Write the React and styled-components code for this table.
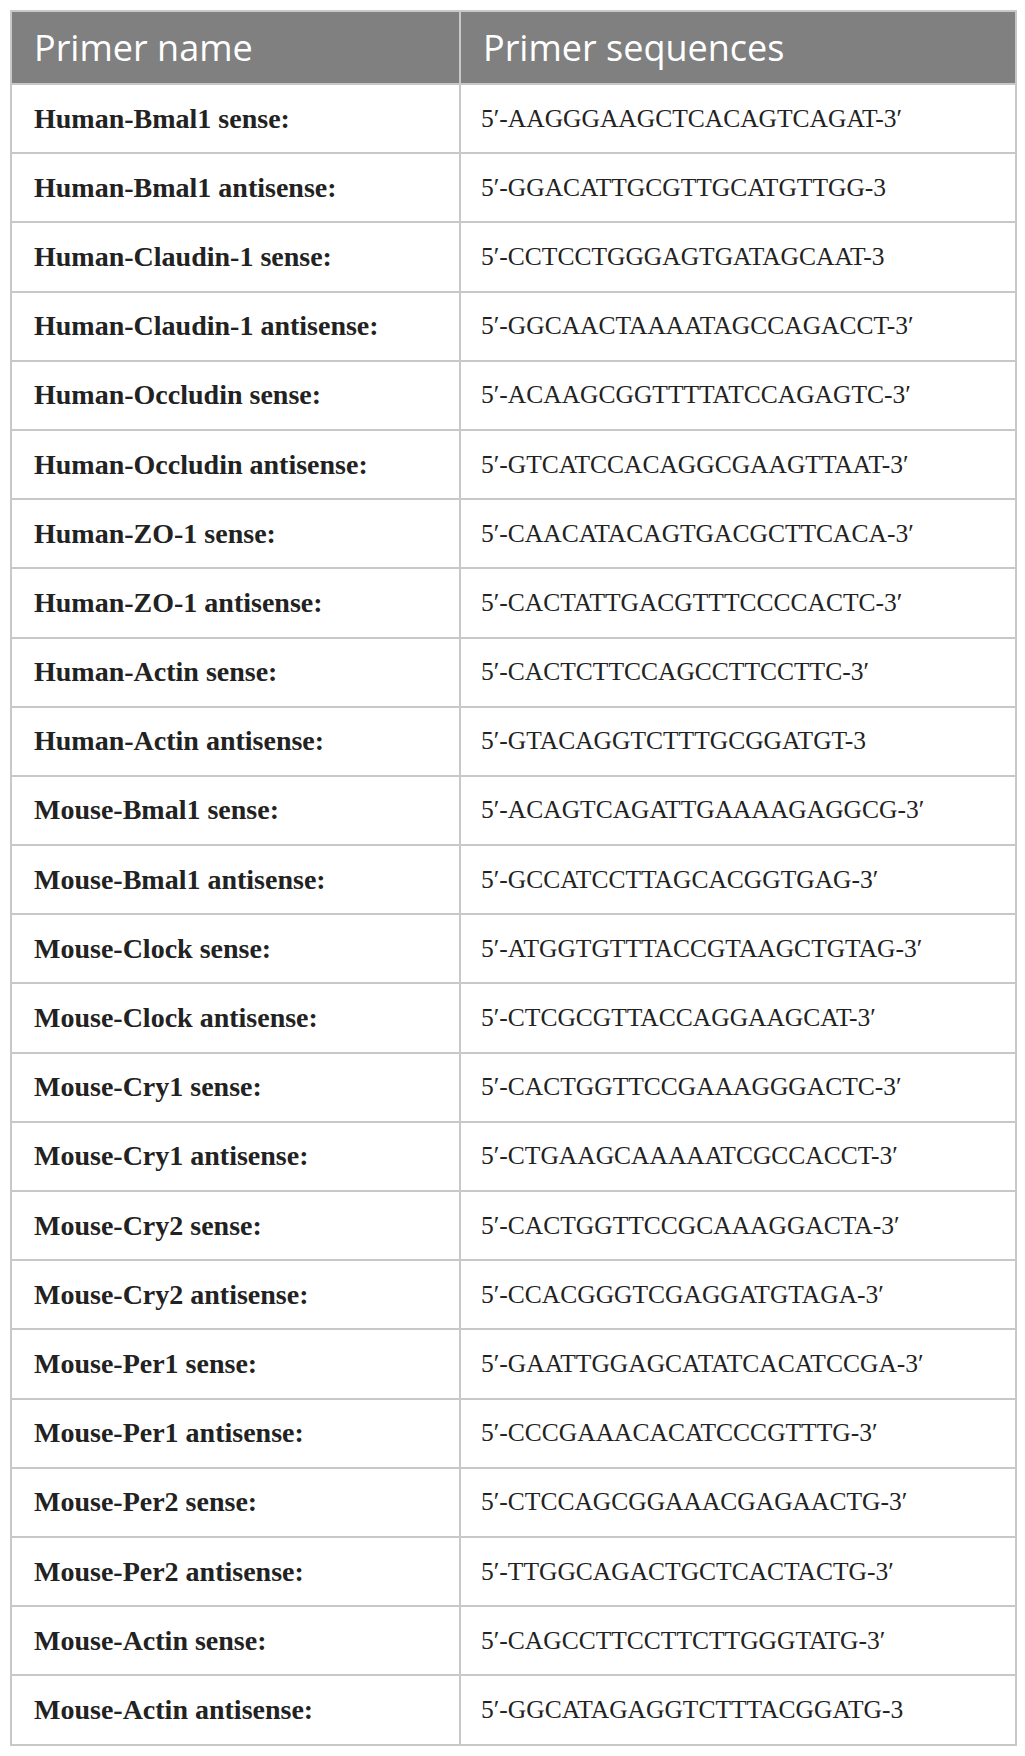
import styled, { createGlobalStyle } from 'styled-components'

const GlobalStyle = createGlobalStyle`
  html, body {
    margin: 0;
    padding: 0;
    background: #fff;
  }
`

const primers = [
  ['Human-Bmal1 sense:', '5′-AAGGGAAGCTCACAGTCAGAT-3′'],
  ['Human-Bmal1 antisense:', '5′-GGACATTGCGTTGCATGTTGG-3'],
  ['Human-Claudin-1 sense:', '5′-CCTCCTGGGAGTGATAGCAAT-3'],
  ['Human-Claudin-1 antisense:', '5′-GGCAACTAAAATAGCCAGACCT-3′'],
  ['Human-Occludin sense:', '5′-ACAAGCGGTTTTATCCAGAGTC-3′'],
  ['Human-Occludin antisense:', '5′-GTCATCCACAGGCGAAGTTAAT-3′'],
  ['Human-ZO-1 sense:', '5′-CAACATACAGTGACGCTTCACA-3′'],
  ['Human-ZO-1 antisense:', '5′-CACTATTGACGTTTCCCCACTC-3′'],
  ['Human-Actin sense:', '5′-CACTCTTCCAGCCTTCCTTC-3′'],
  ['Human-Actin antisense:', '5′-GTACAGGTCTTTGCGGATGT-3'],
  ['Mouse-Bmal1 sense:', '5′-ACAGTCAGATTGAAAAGAGGCG-3′'],
  ['Mouse-Bmal1 antisense:', '5′-GCCATCCTTAGCACGGTGAG-3′'],
  ['Mouse-Clock sense:', '5′-ATGGTGTTTACCGTAAGCTGTAG-3′'],
  ['Mouse-Clock antisense:', '5′-CTCGCGTTACCAGGAAGCAT-3′'],
  ['Mouse-Cry1 sense:', '5′-CACTGGTTCCGAAAGGGACTC-3′'],
  ['Mouse-Cry1 antisense:', '5′-CTGAAGCAAAAATCGCCACCT-3′'],
  ['Mouse-Cry2 sense:', '5′-CACTGGTTCCGCAAAGGACTA-3′'],
  ['Mouse-Cry2 antisense:', '5′-CCACGGGTCGAGGATGTAGA-3′'],
  ['Mouse-Per1 sense:', '5′-GAATTGGAGCATATCACATCCGA-3′'],
  ['Mouse-Per1 antisense:', '5′-CCCGAAACACATCCCGTTTG-3′'],
  ['Mouse-Per2 sense:', '5′-CTCCAGCGGAAACGAGAACTG-3′'],
  ['Mouse-Per2 antisense:', '5′-TTGGCAGACTGCTCACTACTG-3′'],
  ['Mouse-Actin sense:', '5′-CAGCCTTCCTTCTTGGGTATG-3′'],
  ['Mouse-Actin antisense:', '5′-GGCATAGAGGTCTTTACGGATG-3'],
]

const Page = styled.div`
  padding: 10px;
`

const Table = styled.table`
  width: 1005px;
  border-collapse: collapse;
  table-layout: fixed;
  border: 2px solid #c8c8c8;
`

const Col = styled.col`
  width: ${(p) => p.$w}px;
`

const HeadCell = styled.th`
  box-sizing: border-box;
  height: 73px;
  padding: 0 0 0 22px;
  background: #808080;
  color: #fff;
  font-family: 'Open Sans', 'Noto Sans', sans-serif;
  font-weight: 400;
  font-size: 36px;
  text-align: left;
  border: 2px solid #c8c8c8;
`

const Cell = styled.td`
  height: 67.2px;
  padding: 0 0 0 ${(p) => (p.$name ? 22 : 20)}px;
  border: 2px solid #c8c8c8;
  color: #222;
  font-family: 'Liberation Serif', 'Times New Roman', serif;
  font-size: ${(p) => (p.$name ? 28 : 25.5)}px;
  font-weight: ${(p) => (p.$name ? 700 : 400)};
  white-space: nowrap;
`

export default function App() {
  return (
    <>
      <GlobalStyle />
      <Page>
        <Table>
          <colgroup>
            <Col $w={449} />
            <Col $w={556} />
          </colgroup>
          <thead>
            <tr>
              <HeadCell>Primer name</HeadCell>
              <HeadCell>Primer sequences</HeadCell>
            </tr>
          </thead>
          <tbody>
            {primers.map(([name, seq]) => (
              <tr key={name}>
                <Cell $name>{name}</Cell>
                <Cell>{seq}</Cell>
              </tr>
            ))}
          </tbody>
        </Table>
      </Page>
    </>
  )
}
